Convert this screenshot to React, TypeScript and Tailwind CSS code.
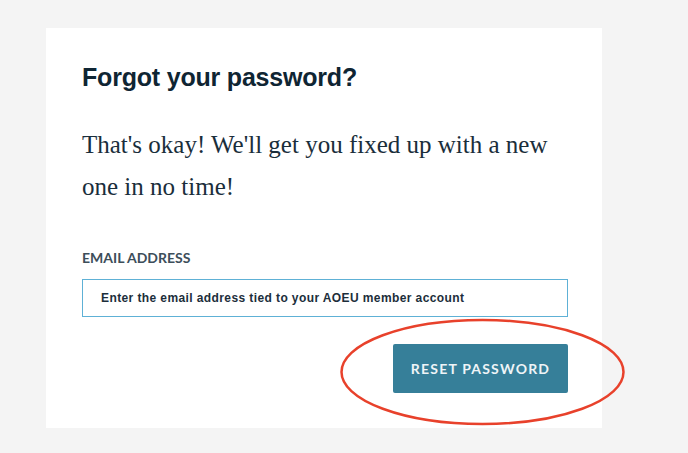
export default function App() {
  return (
    <div className="min-h-screen w-full bg-[#f4f4f4] pt-[28px] pl-[46px]">
      <div className="relative w-[556px] h-[400px] bg-white px-[36px] pt-[35px]">
        <h1 className="text-[25px] leading-[29px] font-bold tracking-[-0.2px] text-[#0f2533] font-['Liberation_Sans',sans-serif]">
          Forgot your password?
        </h1>

        <p className="mt-[32px] text-[25px] leading-[42px] text-[#1a2e3b] font-['Liberation_Serif',serif]">
          That's okay! We'll get you fixed up with a new one in no time!
        </p>

        <label className="mt-[41px] block text-[14px] leading-[17px] font-bold text-[#3d4e5a] font-['Lato','Liberation_Sans',sans-serif]">
          EMAIL ADDRESS
        </label>

        <input
          type="email"
          placeholder="Enter the email address tied to your AOEU member account"
          className="mt-[13px] block w-[486px] h-[38px] border border-[#5eb1d6] bg-white px-[18px] text-[12px] font-bold tracking-[0.4px] text-[#1c2e3b] placeholder:text-[#1c2e3b] outline-none font-['Liberation_Sans',sans-serif]"
        />

        <div className="mt-[27px] flex w-[486px] justify-end">
          <button className="w-[175px] h-[49px] rounded-[2px] bg-[#367f99] text-[14px] font-bold tracking-[1.2px] text-[#eef4f7] font-['Lato','Liberation_Sans',sans-serif]">
            RESET PASSWORD
          </button>
        </div>

        {/* annotation ring */}
        <svg
          className="absolute left-[293px] top-[290px] pointer-events-none"
          width="287"
          height="110"
          viewBox="0 0 287 110"
        >
          <ellipse cx="143.5" cy="54" rx="141" ry="52" fill="none" stroke="#e8412b" strokeWidth="2.5" />
        </svg>
      </div>
    </div>
  )
}
